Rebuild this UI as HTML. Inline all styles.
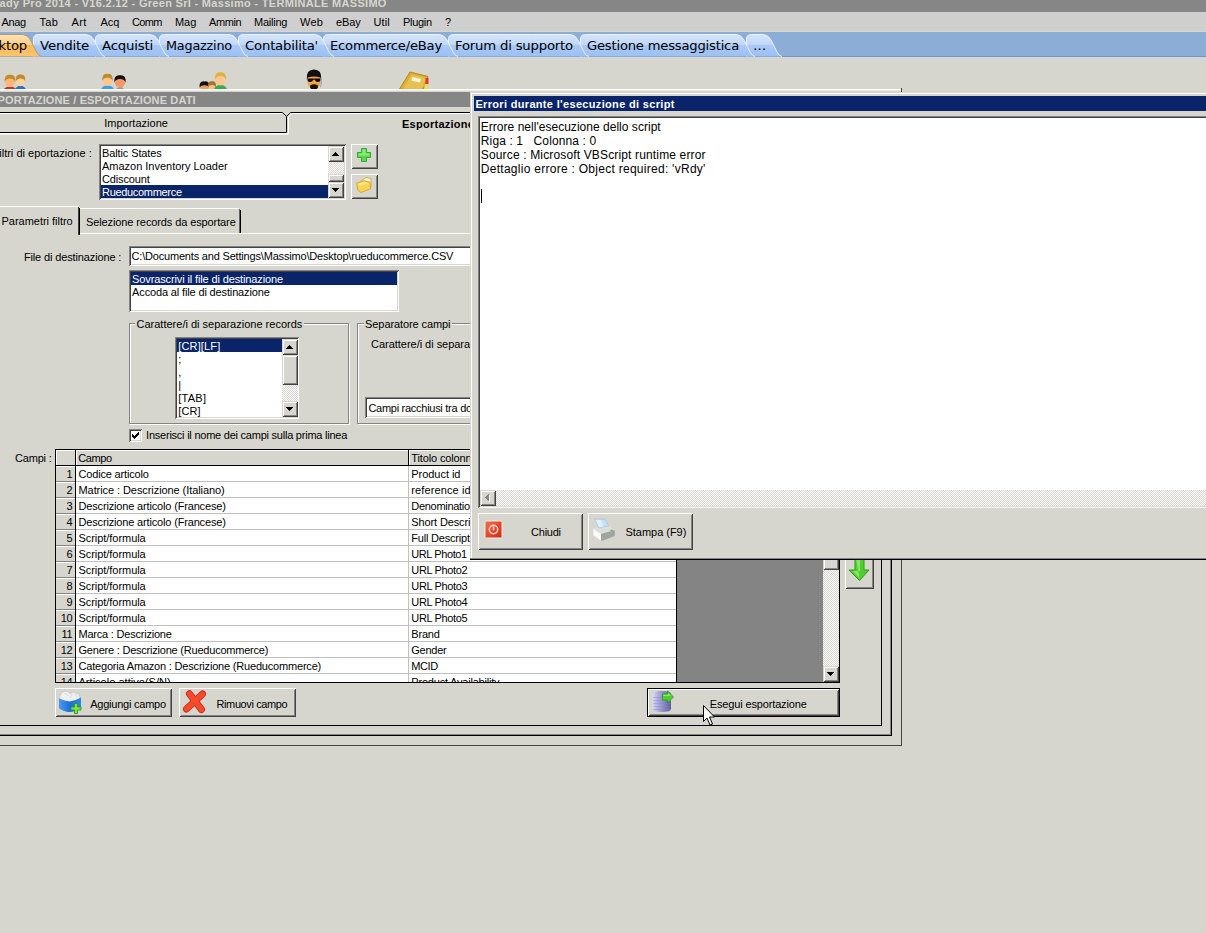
<!DOCTYPE html>
<html lang="it"><head><meta charset="utf-8"><title>Ready Pro 2014</title>
<style>
html,body{margin:0;padding:0}
html{overflow:hidden;width:1206px;height:933px}
body{width:1206px;height:933px;overflow:hidden;background:#d6d6ce;position:relative;font:11px/13px "Liberation Sans",sans-serif;letter-spacing:-0.2px;color:#000}
.a{position:absolute;white-space:pre}
.b{position:absolute}
.c{position:absolute;overflow:hidden}
.sunken{box-shadow:inset 1px 1px 0 #848484,inset -1px -1px 0 #fff,inset 2px 2px 0 #424242,inset -2px -2px 0 #d6d6ce}
.raised{background:#d6d6ce;box-shadow:inset 1px 1px 0 #fff,inset -1px -1px 0 #424242,inset 2px 2px 0 #d6d6ce,inset -2px -2px 0 #848484}
.sbtn{background:#d6d6ce;box-shadow:inset 1px 1px 0 #d6d6ce,inset -1px -1px 0 #424242,inset 2px 2px 0 #fff,inset -2px -2px 0 #848484}
.track{background-color:#fff;background-image:linear-gradient(45deg,#d6d6ce 25%,transparent 25%,transparent 75%,#d6d6ce 75%),linear-gradient(45deg,#d6d6ce 25%,transparent 25%,transparent 75%,#d6d6ce 75%);background-size:2px 2px;background-position:0 0,1px 1px}
.sel{background:#0a246a}
.w{background:#fff}
.k{background:#000}
.arr{position:absolute;width:0;height:0;border:4px solid transparent}
.tabs text{font:13px "DejaVu Sans",sans-serif;fill:#000}
</style></head><body>

<div class="c" style="left:0;top:0;width:1206px;height:12px;background:#868686">
<div class="a" style="top:-3px;left:-0.5px;letter-spacing:0.305px;font-weight:bold;color:#d6d6ce;">ady Pro 2014 - V16.2.12 - Green Srl - Massimo - TERMINALE MASSIMO</div>
</div>
<div class="b" style="left:0;top:12px;width:1206px;height:19px;background:#cfcfcf"></div>
<div class="a" style="top:16px;left:1.5px;letter-spacing:-0.376px;">Anag</div>
<div class="a" style="top:16px;left:39.5px;letter-spacing:0.317px;">Tab</div>
<div class="a" style="top:16px;left:71.5px;letter-spacing:0.379px;">Art</div>
<div class="a" style="top:16px;left:100.5px;letter-spacing:-0.09px;">Acq</div>
<div class="a" style="top:16px;left:132px;letter-spacing:-0.673px;">Comm</div>
<div class="a" style="top:16px;left:175px;letter-spacing:-0.069px;">Mag</div>
<div class="a" style="top:16px;left:209px;letter-spacing:-0.407px;">Ammin</div>
<div class="a" style="top:16px;left:254px;letter-spacing:-0.237px;">Mailing</div>
<div class="a" style="top:16px;left:300px;letter-spacing:0.259px;">Web</div>
<div class="a" style="top:16px;left:336px;letter-spacing:-0.095px;">eBay</div>
<div class="a" style="top:16px;left:373.5px;letter-spacing:0.077px;">Util</div>
<div class="a" style="top:16px;left:403px;letter-spacing:-0.313px;">Plugin</div>
<div class="a" style="top:16px;left:445px;letter-spacing:0.075px;">?</div>
<svg class="b tabs" style="left:0;top:32px" width="1206" height="25" viewBox="0 0 1206 25">
<defs><linearGradient id="tb" x1="0" y1="0" x2="0" y2="1"><stop offset="0" stop-color="#d4e4fb"/><stop offset="0.45" stop-color="#c2d8f8"/><stop offset="0.5" stop-color="#a9c8f5"/><stop offset="1" stop-color="#9cc0f4"/></linearGradient>
<linearGradient id="to" x1="0" y1="0" x2="0" y2="1"><stop offset="0" stop-color="#fde3b5"/><stop offset="0.45" stop-color="#fbcf8c"/><stop offset="0.5" stop-color="#f9b95a"/><stop offset="1" stop-color="#fbc56f"/></linearGradient></defs>
<rect x="0" y="0" width="1206" height="25" fill="#8caed6"/><rect x="0" y="24" width="1206" height="1" fill="#6f95c9"/>
<path d="M746.5 24.5 L746.5 7 Q746.5 2.5 751.5 2.5 L763 2.5 Q768 2.5 771 8 L777 20 Q779 24 782 24.5 Z" fill="url(#tb)"/><path d="M746.5 24.5 L746.5 7 Q746.5 2.5 751.5 2.5 L763 2.5 Q768 2.5 771 8 L777 20 Q779 24 782 24.5" fill="none" stroke="#e9f1fd" stroke-width="1"/>
<path d="M580.5 24.5 L580.5 7 Q580.5 2.5 585.5 2.5 L736 2.5 Q741 2.5 744 8 L750 20 Q752 24 755 24.5 Z" fill="url(#tb)"/><path d="M580.5 24.5 L580.5 7 Q580.5 2.5 585.5 2.5 L736 2.5 Q741 2.5 744 8 L750 20 Q752 24 755 24.5" fill="none" stroke="#e9f1fd" stroke-width="1"/>
<path d="M448.5 24.5 L448.5 7 Q448.5 2.5 453.5 2.5 L570 2.5 Q575 2.5 578 8 L584 20 Q586 24 589 24.5 Z" fill="url(#tb)"/><path d="M448.5 24.5 L448.5 7 Q448.5 2.5 453.5 2.5 L570 2.5 Q575 2.5 578 8 L584 20 Q586 24 589 24.5" fill="none" stroke="#e9f1fd" stroke-width="1"/>
<path d="M323.5 24.5 L323.5 7 Q323.5 2.5 328.5 2.5 L439 2.5 Q444 2.5 447 8 L453 20 Q455 24 458 24.5 Z" fill="url(#tb)"/><path d="M323.5 24.5 L323.5 7 Q323.5 2.5 328.5 2.5 L439 2.5 Q444 2.5 447 8 L453 20 Q455 24 458 24.5" fill="none" stroke="#e9f1fd" stroke-width="1"/>
<path d="M238.5 24.5 L238.5 7 Q238.5 2.5 243.5 2.5 L315 2.5 Q320 2.5 323 8 L329 20 Q331 24 334 24.5 Z" fill="url(#tb)"/><path d="M238.5 24.5 L238.5 7 Q238.5 2.5 243.5 2.5 L315 2.5 Q320 2.5 323 8 L329 20 Q331 24 334 24.5" fill="none" stroke="#e9f1fd" stroke-width="1"/>
<path d="M159.5 24.5 L159.5 7 Q159.5 2.5 164.5 2.5 L229 2.5 Q234 2.5 237 8 L243 20 Q245 24 248 24.5 Z" fill="url(#tb)"/><path d="M159.5 24.5 L159.5 7 Q159.5 2.5 164.5 2.5 L229 2.5 Q234 2.5 237 8 L243 20 Q245 24 248 24.5" fill="none" stroke="#e9f1fd" stroke-width="1"/>
<path d="M95.5 24.5 L95.5 7 Q95.5 2.5 100.5 2.5 L150 2.5 Q155 2.5 158 8 L164 20 Q166 24 169 24.5 Z" fill="url(#tb)"/><path d="M95.5 24.5 L95.5 7 Q95.5 2.5 100.5 2.5 L150 2.5 Q155 2.5 158 8 L164 20 Q166 24 169 24.5" fill="none" stroke="#e9f1fd" stroke-width="1"/>
<path d="M33.5 24.5 L33.5 7 Q33.5 2.5 38.5 2.5 L86 2.5 Q91 2.5 94 8 L100 20 Q102 24 105 24.5 Z" fill="url(#tb)"/><path d="M33.5 24.5 L33.5 7 Q33.5 2.5 38.5 2.5 L86 2.5 Q91 2.5 94 8 L100 20 Q102 24 105 24.5" fill="none" stroke="#e9f1fd" stroke-width="1"/>
<path d="M-20 24.5 L-20 7 Q-20 2.5 -15 2.5 L22.5 2.5 Q27.5 2.5 30.5 8 L36.5 20 Q38.5 24 41.5 24.5 Z" fill="url(#to)"/><path d="M-20 24.5 L-20 7 Q-20 2.5 -15 2.5 L22.5 2.5 Q27.5 2.5 30.5 8 L36.5 20 Q38.5 24 41.5 24.5" fill="none" stroke="#b89a6a" stroke-width="1"/>
<text x="-1.5" y="18" textLength="28.5" lengthAdjust="spacingAndGlyphs">ktop</text>
<text x="40" y="18" textLength="49" lengthAdjust="spacingAndGlyphs">Vendite</text>
<text x="102" y="18" textLength="51" lengthAdjust="spacingAndGlyphs">Acquisti</text>
<text x="166" y="18" textLength="66" lengthAdjust="spacingAndGlyphs">Magazzino</text>
<text x="245" y="18" textLength="73" lengthAdjust="spacingAndGlyphs">Contabilita'</text>
<text x="330" y="18" textLength="112" lengthAdjust="spacingAndGlyphs">Ecommerce/eBay</text>
<text x="455" y="18" textLength="118" lengthAdjust="spacingAndGlyphs">Forum di supporto</text>
<text x="587" y="18" textLength="152" lengthAdjust="spacingAndGlyphs">Gestione messaggistica</text>
<text x="753" y="18" textLength="13" lengthAdjust="spacingAndGlyphs">...</text>
</svg>
<svg class="b" style="left:0;top:57px" width="470" height="32" viewBox="0 0 470 32">
<ellipse cx="20.5" cy="33.7" rx="5.5" ry="5" fill="#2a6fd0"/><ellipse cx="20.5" cy="24" rx="4.2" ry="5.2" fill="#fcd2a0"/><path d="M15.700000000000001 24.5 Q15.3 16.8 20.5 17.6 Q25.7 16.8 25.3 24.5 Q23.7 21.3 20.5 21.400000000000002 Q17.3 21.3 15.700000000000001 24.5Z" fill="#c08a2e"/>
<ellipse cx="10" cy="34.6" rx="7" ry="5" fill="#d0302a"/><ellipse cx="10" cy="24.5" rx="4.8" ry="5.6" fill="#fbb878"/><path d="M4.6000000000000005 25.0 Q4.2 16.9 10 17.7 Q15.8 16.9 15.4 25.0 Q13.8 21.4 10 21.5 Q6.2 21.4 4.6000000000000005 25.0Z" fill="#c08a2e"/>
<ellipse cx="107.5" cy="33.4" rx="6.5" ry="5" fill="#3a9fe8"/><ellipse cx="107.5" cy="23.5" rx="4.6" ry="5.4" fill="#fcc68c"/><path d="M102.30000000000001 24.0 Q101.9 16.1 107.5 16.900000000000002 Q113.1 16.1 112.69999999999999 24.0 Q111.1 20.6 107.5 20.700000000000003 Q103.9 20.6 102.30000000000001 24.0Z" fill="#c08a2e"/>
<ellipse cx="120" cy="35.1" rx="5" ry="5" fill="#999"/><ellipse cx="120" cy="25" rx="5.2" ry="5.6" fill="#fb9868"/><path d="M114.2 25.5 Q113.8 17.4 120 18.2 Q126.2 17.4 125.8 25.5 Q124.2 21.9 120 22.0 Q115.8 21.9 114.2 25.5Z" fill="#111"/>
<ellipse cx="204.5" cy="38.9" rx="3" ry="5" fill="#444"/><ellipse cx="204.5" cy="30" rx="4.4" ry="4.4" fill="#e9a060"/><path d="M199.5 30.5 Q199.1 23.6 204.5 24.400000000000002 Q209.9 23.6 209.5 30.5 Q207.9 28.1 204.5 28.200000000000003 Q201.1 28.1 199.5 30.5Z" fill="#111"/>
<ellipse cx="212" cy="38.0" rx="2" ry="5" fill="#444"/><ellipse cx="212" cy="29.5" rx="3.4" ry="4" fill="#f6c080"/><path d="M208.0 30.0 Q207.6 23.5 212 24.3 Q216.4 23.5 216.0 30.0 Q214.4 28.0 212 28.1 Q209.6 28.0 208.0 30.0Z" fill="#a87428"/>
<ellipse cx="220.5" cy="33.0" rx="6.5" ry="5" fill="#3aaa4a"/><ellipse cx="220.5" cy="22.5" rx="5" ry="6" fill="#fcc890"/><path d="M214.9 23.0 Q214.5 14.5 220.5 15.3 Q226.5 14.5 226.1 23.0 Q224.5 19.0 220.5 19.1 Q216.5 19.0 214.9 23.0Z" fill="#e0b040"/>
<ellipse cx="314" cy="23.8" rx="6.8" ry="8.4" fill="#f5a448"/><path d="M306.8 23 Q305.8 12.6 314 12.6 Q322.2 12.6 321.2 23 L320.2 20.6 Q314 18.6 307.8 20.6Z" fill="#111"/><path d="M307.6 21.4 H320.4 V23.4 Q319.6 25.2 317.4 25 Q315.2 24.8 314.8 22.8 H313.2 Q312.8 24.8 310.6 25 Q308.4 25.2 307.6 23.4Z" fill="#0a0a0a"/><path d="M310.2 28.2 Q314 26.2 317.8 28.2 Q318.4 31 316.6 32 H311.4 Q309.6 31 310.2 28.2Z" fill="#1a1208"/><path d="M320.8 21 Q322.2 25 320.6 30" stroke="#7a86d8" stroke-width="0.8" fill="none"/>
<path d="M399.5 32 L410 15 L428 19.5 L423.5 32 Z" fill="#dcae34" stroke="#b58a1c" stroke-width="1"/><path d="M403 32 L411.5 17.5 L426 21 L422 32Z" fill="#e9c65a" opacity=".75"/><path d="M412.5 20 L421 22 L419.8 25.6 L411.3 23.6Z" fill="#fff4dc"/><rect x="425.5" y="21" width="3" height="6" fill="#e23a2a"/><rect x="424.5" y="27" width="3" height="5" fill="#f2e23a"/>
</svg>
<div class="b w" style="left:0;top:89px;width:901px;height:1px"></div><div class="b" style="left:0;top:90px;width:901px;height:1px;background:#ecebe6"></div>
<div class="c" style="left:0;top:92px;width:900px;height:15px;background:#868686">
<div class="a" style="top:2px;left:-2.5px;letter-spacing:0.129px;font-weight:bold;color:#d6d6ce;">PORTAZIONE / ESPORTAZIONE DATI</div>
</div>
<div class="b" style="left:901px;top:88px;width:1px;height:3px;background:#424242"></div>
<svg class="b" style="left:0;top:108px" width="470" height="30" viewBox="0 0 470 30">
<path d="M0 4.5 H282.5 L286.5 8.5 V24.5 H0" fill="none" stroke="#000" stroke-width="1"/>
<path d="M0 5.5 H282" fill="none" stroke="#fff" stroke-width="1"/>
<path d="M0 25.5 H288.5 V9 L291.5 5.5 H470" fill="none" stroke="#fff" stroke-width="1"/>
<path d="M0 26.5 H288.5" fill="none" stroke="#fff" stroke-width="1" opacity="0.6"/>
<path d="M286.5 8.5 L290.5 4.5 H470" fill="none" stroke="#000" stroke-width="1"/>
</svg>
<div class="a" style="top:117px;left:104.2px;letter-spacing:0.009px;">Importazione</div>
<div class="c" style="left:390px;top:114px;width:80px;height:20px">
<div class="a" style="top:4px;left:12px;letter-spacing:0.259px;font-weight:bold;">Esportazione</div>
</div>
<div class="c" style="left:0;top:144px;width:98px;height:20px">
<div class="a" style="top:3px;left:-7.5px;letter-spacing:0.007px;">Filtri di eportazione :</div>
</div>
<div class="b w sunken" style="left:99px;top:144px;width:247px;height:56px"></div>
<div class="b sel" style="left:101px;top:185px;width:227px;height:13px"></div>
<div class="a" style="top:147px;left:102px;letter-spacing:-0.111px;">Baltic States</div>
<div class="a" style="top:160px;left:102px;letter-spacing:-0.012px;">Amazon Inventory Loader</div>
<div class="a" style="top:173px;left:102px;letter-spacing:-0.136px;">Cdiscount</div>
<div class="a" style="top:186px;left:102px;letter-spacing:-0.313px;color:#fff;">Rueducommerce</div>
<div class="b track" style="left:328px;top:146px;width:16px;height:52px"></div>
<div class="b sbtn" style="left:328px;top:146px;width:16px;height:16px"><svg class="b" style="left:0;top:0" width="16" height="16" shape-rendering="crispEdges"><path d="M7 6h1v1h1v1h1v1h1v1h-7v-1h1v-1h1v-1h1z"/></svg></div>
<div class="b sbtn" style="left:328px;top:174px;width:16px;height:8px"></div>
<div class="b sbtn" style="left:328px;top:182px;width:16px;height:16px"><svg class="b" style="left:0;top:0" width="16" height="16" shape-rendering="crispEdges"><path d="M4 6h7v1h-1v1h-1v1h-1v1h-1v-1h-1v-1h-1v-1h-1z"/></svg></div>
<div class="b raised" style="left:351px;top:144px;width:27px;height:25px"><svg width="27" height="25" viewBox="0 0 27 25"><path d="M10.5 4.5H15.5V8.5H19.5V13.5H15.5V17.5H10.5V13.5H6.5V8.5H10.5Z" fill="#5cd848" stroke="#32a832" stroke-width="1"/><path d="M11.5 5.5h3v4h4v2h-11v-2h4z" fill="#9cf088" opacity=".75"/></svg></div>
<div class="b raised" style="left:351px;top:174px;width:27px;height:25px"><svg width="27" height="25" viewBox="0 0 27 25"><path d="M10 7 L15 3.5 L20 4.5 L20 13.5 L14 16Z" fill="#fdf6d4" stroke="#d4a43a" stroke-width=".9"/><path d="M5.5 9.2 L13 6.8 L19 8.2 L19.5 14.8 L10 18.5 L7 16.2Z" fill="#f8d650" stroke="#d89c2c" stroke-width=".9"/><path d="M6.5 9.8 L12.8 7.8 L18 9 L10 12Z" fill="#fdeb90" opacity=".8"/></svg></div>
<svg class="b" style="left:0;top:204px" width="470" height="32" viewBox="0 0 470 32">
<path d="M0 2.5 H78" stroke="#fff" fill="none"/>
<path d="M78.5 3 V31" stroke="#424242" fill="none"/><path d="M79.5 4 V31" stroke="#000" fill="none"/>
<path d="M80 4.5 H239" stroke="#fff" fill="none"/>
<path d="M239.5 5 V29" stroke="#636363" fill="none"/><path d="M240.5 6 V29" stroke="#000" fill="none"/>
<path d="M80 29.5 H470" stroke="#fff" fill="none"/>
</svg>
<div class="a" style="top:215px;left:1.5px;letter-spacing:-0.021px;">Parametri filtro</div>
<div class="a" style="top:216px;left:86px;letter-spacing:-0.106px;">Selezione records da esportare</div>
<div class="a" style="top:251px;left:23.9px;letter-spacing:-0.131px;">File di destinazione :</div>
<div class="b w sunken" style="left:129px;top:246px;width:345px;height:20px"></div>
<div class="a" style="top:250px;left:131.5px;letter-spacing:-0.184px;">C:\Documents and Settings\Massimo\Desktop\rueducommerce.CSV</div>
<div class="b w sunken" style="left:129px;top:270px;width:270px;height:42px"></div>
<div class="b sel" style="left:131px;top:272px;width:266px;height:13px"></div>
<div class="a" style="top:273px;left:132.1px;letter-spacing:-0.126px;color:#fff;">Sovrascrivi il file di destinazione</div>
<div class="a" style="top:286px;left:132.1px;letter-spacing:-0.143px;">Accoda al file di destinazione</div>
<div class="b" style="left:129px;top:323px;width:220px;height:101px;border:1px solid #848484;box-sizing:border-box;box-shadow:1px 1px 0 #fff,inset 1px 1px 0 #fff"></div>
<div class="b" style="left:135px;top:321px;width:168.60000000000002px;height:5px;background:#d6d6ce"></div>
<div class="a" style="top:318px;left:136.5px;letter-spacing:0.003px;">Carattere/i di separazione records</div>
<div class="b" style="left:357px;top:323px;width:200px;height:101px;border:1px solid #848484;box-sizing:border-box;box-shadow:1px 1px 0 #fff,inset 1px 1px 0 #fff"></div>
<div class="b" style="left:363.6px;top:321px;width:88.09999999999997px;height:5px;background:#d6d6ce"></div>
<div class="a" style="top:318px;left:365.1px;letter-spacing:-0.096px;">Separatore campi</div>
<div class="b w sunken" style="left:175px;top:337px;width:124px;height:82px"></div>
<div class="b sel" style="left:177px;top:339px;width:105px;height:13px"></div>
<div class="a" style="top:340px;left:178.3px;letter-spacing:0.143px;color:#fff;">[CR][LF]</div>
<div class="a" style="top:353px;left:178.3px;">;</div>
<div class="a" style="top:366px;left:178.3px;">,</div>
<div class="a" style="top:379px;left:178.3px;">|</div>
<div class="a" style="top:392px;left:178.3px;letter-spacing:0.239px;">[TAB]</div>
<div class="a" style="top:405px;left:178.3px;letter-spacing:0.1px;">[CR]</div>
<div class="b track" style="left:282px;top:339px;width:16px;height:78px"></div>
<div class="b sbtn" style="left:282px;top:339px;width:16px;height:16px"><svg class="b" style="left:0;top:0" width="16" height="16" shape-rendering="crispEdges"><path d="M7 6h1v1h1v1h1v1h1v1h-7v-1h1v-1h1v-1h1z"/></svg></div>
<div class="b sbtn" style="left:282px;top:355px;width:16px;height:30px"></div>
<div class="b sbtn" style="left:282px;top:401px;width:16px;height:16px"><svg class="b" style="left:0;top:0" width="16" height="16" shape-rendering="crispEdges"><path d="M4 6h7v1h-1v1h-1v1h-1v1h-1v-1h-1v-1h-1v-1h-1z"/></svg></div>
<div class="a" style="top:338px;left:371.1px;letter-spacing:-0.032px;">Carattere/i di separazione campi :</div>
<div class="b w sunken" style="left:365px;top:397px;width:180px;height:21px"></div>
<div class="a" style="top:402px;left:368.4px;letter-spacing:-0.273px;">Campi racchiusi tra doppi apici</div>
<div class="b w sunken" style="left:129px;top:429px;width:13px;height:13px"><svg class="b" style="left:0;top:0" width="13" height="13" shape-rendering="crispEdges"><path d="M3 5h1v1h1v1h1v-1h1v-1h1v-1h1v-1h1v3h-1v1h-1v1h-1v1h-1v1h-1v-1h-1v-1h-1z"/></svg></div>
<div class="a" style="top:429px;left:146.1px;letter-spacing:-0.234px;">Inserisci il nome dei campi sulla prima linea</div>
<div class="a" style="top:452px;left:14.9px;letter-spacing:-0.158px;">Campi :</div>
<div class="b k" style="left:55px;top:449px;width:785px;height:234px"></div>
<div class="c" style="left:56px;top:450px;width:767px;height:232px;background:#848484">
<div class="b" style="left:0;top:0;width:19px;height:15px;background:#d6d6ce;box-shadow:inset 1px 1px 0 #fff"></div>
<div class="b" style="left:20px;top:0;width:332px;height:15px;background:#d6d6ce;box-shadow:inset 1px 1px 0 #fff"></div>
<div class="b" style="left:353px;top:0;width:267px;height:15px;background:#d6d6ce;box-shadow:inset 1px 1px 0 #fff"></div>
<div class="b w" style="left:20px;top:16px;width:600px;height:216px"></div>
<div class="b" style="left:352px;top:16px;width:1px;height:216px;background:#c0c0c0"></div>
<div class="b k" style="left:0;top:15px;width:621px;height:1px"></div>
<div class="b k" style="left:19px;top:0;width:1px;height:232px"></div>
<div class="b k" style="left:352px;top:0;width:1px;height:15px"></div>
<div class="b k" style="left:620px;top:0;width:1px;height:232px"></div>
<div class="a" style="top:2px;left:22.3px;letter-spacing:-0.414px;">Campo</div>
<div class="a" style="top:2px;left:355.3px;letter-spacing:-0.137px;">Titolo colonna</div>
<div class="b" style="left:0;top:16px;width:19px;height:15px;background:#d6d6ce;border-top:1px solid #fff;box-sizing:border-box"></div>
<div class="b" style="left:0;top:31px;width:19px;height:1px;background:#848484"></div><div class="b" style="left:20px;top:31px;width:600px;height:1px;background:#c0c0c0"></div>
<div class="a" style="top:18px;width:16.5px;text-align:right;left:0;">1</div>
<div class="a" style="top:18px;left:22.5px;letter-spacing:-0.171px;">Codice articolo</div>
<div class="a" style="top:18px;left:355.3px;letter-spacing:-0.043px;">Product id</div>
<div class="b" style="left:0;top:32px;width:19px;height:15px;background:#d6d6ce;border-top:1px solid #fff;box-sizing:border-box"></div>
<div class="b" style="left:0;top:47px;width:19px;height:1px;background:#848484"></div><div class="b" style="left:20px;top:47px;width:600px;height:1px;background:#c0c0c0"></div>
<div class="a" style="top:34px;width:16.5px;text-align:right;left:0;">2</div>
<div class="a" style="top:34px;left:22.5px;letter-spacing:-0.074px;">Matrice : Descrizione (Italiano)</div>
<div class="a" style="top:34px;left:355.3px;letter-spacing:0.109px;">reference id</div>
<div class="b" style="left:0;top:48px;width:19px;height:15px;background:#d6d6ce;border-top:1px solid #fff;box-sizing:border-box"></div>
<div class="b" style="left:0;top:63px;width:19px;height:1px;background:#848484"></div><div class="b" style="left:20px;top:63px;width:600px;height:1px;background:#c0c0c0"></div>
<div class="a" style="top:50px;width:16.5px;text-align:right;left:0;">3</div>
<div class="a" style="top:50px;left:22.5px;letter-spacing:-0.162px;">Descrizione articolo (Francese)</div>
<div class="a" style="top:50px;left:355.3px;letter-spacing:-0.294px;">Denomination</div>
<div class="b" style="left:0;top:64px;width:19px;height:15px;background:#d6d6ce;border-top:1px solid #fff;box-sizing:border-box"></div>
<div class="b" style="left:0;top:79px;width:19px;height:1px;background:#848484"></div><div class="b" style="left:20px;top:79px;width:600px;height:1px;background:#c0c0c0"></div>
<div class="a" style="top:66px;width:16.5px;text-align:right;left:0;">4</div>
<div class="a" style="top:66px;left:22.5px;letter-spacing:-0.162px;">Descrizione articolo (Francese)</div>
<div class="a" style="top:66px;left:355.3px;letter-spacing:-0.128px;">Short Description</div>
<div class="b" style="left:0;top:80px;width:19px;height:15px;background:#d6d6ce;border-top:1px solid #fff;box-sizing:border-box"></div>
<div class="b" style="left:0;top:95px;width:19px;height:1px;background:#848484"></div><div class="b" style="left:20px;top:95px;width:600px;height:1px;background:#c0c0c0"></div>
<div class="a" style="top:82px;width:16.5px;text-align:right;left:0;">5</div>
<div class="a" style="top:82px;left:22.5px;letter-spacing:-0.047px;">Script/formula</div>
<div class="a" style="top:82px;left:355.3px;letter-spacing:-0.202px;">Full Description</div>
<div class="b" style="left:0;top:96px;width:19px;height:15px;background:#d6d6ce;border-top:1px solid #fff;box-sizing:border-box"></div>
<div class="b" style="left:0;top:111px;width:19px;height:1px;background:#848484"></div><div class="b" style="left:20px;top:111px;width:600px;height:1px;background:#c0c0c0"></div>
<div class="a" style="top:98px;width:16.5px;text-align:right;left:0;">6</div>
<div class="a" style="top:98px;left:22.5px;letter-spacing:-0.047px;">Script/formula</div>
<div class="a" style="top:98px;left:355.3px;letter-spacing:-0.413px;">URL Photo1</div>
<div class="b" style="left:0;top:112px;width:19px;height:15px;background:#d6d6ce;border-top:1px solid #fff;box-sizing:border-box"></div>
<div class="b" style="left:0;top:127px;width:19px;height:1px;background:#848484"></div><div class="b" style="left:20px;top:127px;width:600px;height:1px;background:#c0c0c0"></div>
<div class="a" style="top:114px;width:16.5px;text-align:right;left:0;">7</div>
<div class="a" style="top:114px;left:22.5px;letter-spacing:-0.047px;">Script/formula</div>
<div class="a" style="top:114px;left:355.3px;letter-spacing:-0.363px;">URL Photo2</div>
<div class="b" style="left:0;top:128px;width:19px;height:15px;background:#d6d6ce;border-top:1px solid #fff;box-sizing:border-box"></div>
<div class="b" style="left:0;top:143px;width:19px;height:1px;background:#848484"></div><div class="b" style="left:20px;top:143px;width:600px;height:1px;background:#c0c0c0"></div>
<div class="a" style="top:130px;width:16.5px;text-align:right;left:0;">8</div>
<div class="a" style="top:130px;left:22.5px;letter-spacing:-0.047px;">Script/formula</div>
<div class="a" style="top:130px;left:355.3px;letter-spacing:-0.363px;">URL Photo3</div>
<div class="b" style="left:0;top:144px;width:19px;height:15px;background:#d6d6ce;border-top:1px solid #fff;box-sizing:border-box"></div>
<div class="b" style="left:0;top:159px;width:19px;height:1px;background:#848484"></div><div class="b" style="left:20px;top:159px;width:600px;height:1px;background:#c0c0c0"></div>
<div class="a" style="top:146px;width:16.5px;text-align:right;left:0;">9</div>
<div class="a" style="top:146px;left:22.5px;letter-spacing:-0.047px;">Script/formula</div>
<div class="a" style="top:146px;left:355.3px;letter-spacing:-0.363px;">URL Photo4</div>
<div class="b" style="left:0;top:160px;width:19px;height:15px;background:#d6d6ce;border-top:1px solid #fff;box-sizing:border-box"></div>
<div class="b" style="left:0;top:175px;width:19px;height:1px;background:#848484"></div><div class="b" style="left:20px;top:175px;width:600px;height:1px;background:#c0c0c0"></div>
<div class="a" style="top:162px;width:16.5px;text-align:right;left:0;">10</div>
<div class="a" style="top:162px;left:22.5px;letter-spacing:-0.047px;">Script/formula</div>
<div class="a" style="top:162px;left:355.3px;letter-spacing:-0.363px;">URL Photo5</div>
<div class="b" style="left:0;top:176px;width:19px;height:15px;background:#d6d6ce;border-top:1px solid #fff;box-sizing:border-box"></div>
<div class="b" style="left:0;top:191px;width:19px;height:1px;background:#848484"></div><div class="b" style="left:20px;top:191px;width:600px;height:1px;background:#c0c0c0"></div>
<div class="a" style="top:178px;width:16.5px;text-align:right;left:0;">11</div>
<div class="a" style="top:178px;left:22.5px;letter-spacing:-0.211px;">Marca : Descrizione</div>
<div class="a" style="top:178px;left:355.3px;letter-spacing:-0.192px;">Brand</div>
<div class="b" style="left:0;top:192px;width:19px;height:15px;background:#d6d6ce;border-top:1px solid #fff;box-sizing:border-box"></div>
<div class="b" style="left:0;top:207px;width:19px;height:1px;background:#848484"></div><div class="b" style="left:20px;top:207px;width:600px;height:1px;background:#c0c0c0"></div>
<div class="a" style="top:194px;width:16.5px;text-align:right;left:0;">12</div>
<div class="a" style="top:194px;left:22.5px;letter-spacing:-0.216px;">Genere : Descrizione (Rueducommerce)</div>
<div class="a" style="top:194px;left:355.3px;letter-spacing:-0.251px;">Gender</div>
<div class="b" style="left:0;top:208px;width:19px;height:15px;background:#d6d6ce;border-top:1px solid #fff;box-sizing:border-box"></div>
<div class="b" style="left:0;top:223px;width:19px;height:1px;background:#848484"></div><div class="b" style="left:20px;top:223px;width:600px;height:1px;background:#c0c0c0"></div>
<div class="a" style="top:210px;width:16.5px;text-align:right;left:0;">13</div>
<div class="a" style="top:210px;left:22.5px;letter-spacing:-0.189px;">Categoria Amazon : Descrizione (Rueducommerce)</div>
<div class="a" style="top:210px;left:355.3px;letter-spacing:-0.427px;">MCID</div>
<div class="b" style="left:0;top:224px;width:19px;height:15px;background:#d6d6ce;border-top:1px solid #fff;box-sizing:border-box"></div>
<div class="b" style="left:0;top:239px;width:19px;height:1px;background:#848484"></div><div class="b" style="left:20px;top:239px;width:600px;height:1px;background:#c0c0c0"></div>
<div class="a" style="top:226px;width:16.5px;text-align:right;left:0;">14</div>
<div class="a" style="top:226px;left:22.5px;letter-spacing:0.025px;">Articolo attivo(S/N)</div>
<div class="a" style="top:226px;left:355.3px;">Product Availability</div>
</div>
<div class="b track" style="left:823px;top:450px;width:16px;height:232px"></div>
<div class="b sbtn" style="left:823px;top:450px;width:16px;height:16px"><svg class="b" style="left:0;top:0" width="16" height="16" shape-rendering="crispEdges"><path d="M7 6h1v1h1v1h1v1h1v1h-7v-1h1v-1h1v-1h1z"/></svg></div>
<div class="b sbtn" style="left:823px;top:466px;width:16px;height:104px"></div>
<div class="b sbtn" style="left:823px;top:666px;width:16px;height:16px"><svg class="b" style="left:0;top:0" width="16" height="16" shape-rendering="crispEdges"><path d="M4 6h7v1h-1v1h-1v1h-1v1h-1v-1h-1v-1h-1v-1h-1z"/></svg></div>
<div class="b raised" style="left:845px;top:558px;width:29px;height:31px"><svg width="29" height="31" viewBox="0 0 29 31"><path d="M10 0 h9 v12 h5 L14.5 22.5 L4 12 H10Z" fill="#4fcf2f" stroke="#2f9a1a" stroke-width="1"/><path d="M11 0h4v13H7.5L14.5 20Z" fill="#a4f484" opacity=".65"/></svg></div>
<div class="b raised" style="left:55px;top:688px;width:117px;height:29px"></div>
<svg class="b" style="left:58px;top:689px" width="28" height="26" viewBox="0 0 28 26"><defs><linearGradient id="bk" x1="0" y1="0" x2="1" y2="0"><stop offset="0" stop-color="#4a9cf0"/><stop offset=".5" stop-color="#1f6ed8"/><stop offset="1" stop-color="#2f86e6"/></linearGradient></defs><path d="M1 9 L4 3 L9 2 L12 4.5 L16 3 L21 5.5 L22.5 10 L12 14 L1 10.5Z" fill="#f0f0f0" stroke="#c4c6c8" stroke-width=".8"/><path d="M7 4 l3 3 M14 5 l-2 4 M17 4.5 l2 3.5" stroke="#d0d2d4" stroke-width=".8" fill="none"/><path d="M1 9.2 Q5 11.5 11.5 12.5 Q18 11.5 23 8.5 V19 Q17 23.5 10 23 Q3 21.5 1 19Z" fill="url(#bk)"/><path d="M16.5 14.5h3v3.5h3.5v3h-3.5v3.5h-3v-3.5h-3.5v-3h3.5z" fill="#78e450" stroke="#2a9a1a" stroke-width=".9"/></svg>
<div class="a" style="top:698px;left:90.2px;letter-spacing:-0.228px;">Aggiungi campo</div>
<div class="b raised" style="left:179px;top:688px;width:117px;height:29px"></div>
<svg class="b" style="left:182px;top:690px" width="26" height="24" viewBox="0 0 26 24"><path d="M7.5 3.8 L19.5 19.5 M20.5 4 L4.5 19" stroke="#c8280e" stroke-width="7" stroke-linecap="round" fill="none"/><path d="M7.5 3.8 L19.5 19.5 M20.5 4 L4.5 19" stroke="#f54a2c" stroke-width="5.4" stroke-linecap="round" fill="none"/></svg>
<div class="a" style="top:698px;left:216.5px;letter-spacing:-0.386px;">Rimuovi campo</div>
<div class="b k" style="left:647px;top:688px;width:193px;height:29px"></div>
<div class="b raised" style="left:648px;top:689px;width:191px;height:27px"></div>
<svg class="b" style="left:651px;top:690px" width="24" height="24" viewBox="0 0 24 24"><defs><linearGradient id="cy" x1="0" y1="0" x2="1" y2="0"><stop offset="0" stop-color="#dcdcf6"/><stop offset=".25" stop-color="#b4b4e2"/><stop offset="1" stop-color="#5c5c9e"/></linearGradient></defs><path d="M1.5 4 Q1.5 1 10.8 1 Q20 1 20 4 V19 Q20 22 10.8 22 Q1.5 22 1.5 19Z" fill="url(#cy)"/><path d="M2 7.5h18M2 10.5h18M2 13.5h18M2 16.5h18M2 19.5h18" stroke="#8484c0" stroke-width=".7" opacity=".6"/><path d="M11.5 4 H16.5 V0.8 L22.5 7 L16.5 13 V10 H11.5Z" fill="#4fcf2f" stroke="#2a9a1a" stroke-width=".8"/><path d="M12.3 4.8H17.3V3L20 6H12.3Z" fill="#a8f488" opacity=".7"/></svg>
<div class="a" style="top:698px;left:709.8px;letter-spacing:-0.147px;">Esegui esportazione</div>
<div class="b k" style="left:0;top:725px;width:882px;height:1px"></div><div class="b k" style="left:881px;top:559px;width:1px;height:167px"></div>
<div class="b" style="left:0;top:734px;width:891px;height:1px;background:#848484"></div><div class="b k" style="left:0;top:735px;width:892px;height:1px"></div>
<div class="b" style="left:890px;top:559px;width:1px;height:176px;background:#848484"></div><div class="b k" style="left:891px;top:559px;width:1px;height:177px"></div>
<div class="b" style="left:0;top:745px;width:902px;height:1px;background:#424242"></div><div class="b" style="left:901px;top:90px;width:1px;height:656px;background:#424242"></div>
<div class="b" style="left:470px;top:92px;width:760px;height:467px;background:#d6d6ce;box-shadow:inset 1px 1px 0 #d6d6ce,inset 2px 2px 0 #fff"></div>
<div class="b" style="left:470px;top:558px;width:760px;height:1px;background:#848484"></div><div class="b" style="left:470px;top:559px;width:760px;height:1px;background:#000"></div>
<div class="b" style="left:474px;top:96px;width:760px;height:15px;background:#0a246a"></div>
<div class="a" style="top:98px;left:475.4px;letter-spacing:0.326px;font-weight:bold;color:#fff;">Errori durante l'esecuzione di script</div>
<div class="b w sunken" style="left:478px;top:116px;width:760px;height:392px"></div>
<div class="a" style="top:120px;left:480.8px;letter-spacing:0.024px;font-size:12px;line-height:14px;">Errore nell'esecuzione dello script</div>
<div class="a" style="top:134px;left:480.8px;letter-spacing:0.126px;font-size:12px;line-height:14px;">Riga : 1   Colonna : 0</div>
<div class="a" style="top:148px;left:480.8px;letter-spacing:0.15px;font-size:12px;line-height:14px;">Source : Microsoft VBScript runtime error</div>
<div class="a" style="top:162px;left:480.8px;letter-spacing:0.275px;font-size:12px;line-height:14px;">Dettaglio errore : Object required: 'vRdy'</div>
<div class="b k" style="left:481px;top:189px;width:1px;height:14px"></div>
<div class="b track" style="left:480px;top:490px;width:760px;height:16px"></div>
<div class="b sbtn" style="left:480px;top:490px;width:16px;height:16px"><svg class="b" style="left:0;top:0" width="16" height="16" shape-rendering="crispEdges"><path d="M6 8h1v-1h1v-1h1v-1h1v7h-1v-1h-1v-1h-1v-1h-1z" fill="#fff"/><path d="M5 7h1v-1h1v-1h1v-1h1v7h-1v-1h-1v-1h-1v-1h-1z" fill="#848484"/></svg></div>
<div class="b raised" style="left:478px;top:513px;width:105px;height:37px"></div>
<svg class="b" style="left:484px;top:520px" width="20" height="20" viewBox="0 0 20 20"><defs><linearGradient id="rd" x1="0" y1="0" x2="1" y2="1"><stop offset="0" stop-color="#f4704c"/><stop offset=".5" stop-color="#e8452a"/><stop offset="1" stop-color="#d02c14"/></linearGradient></defs><rect x="1" y="1" width="17" height="17" rx="1.5" fill="url(#rd)" stroke="#e6f2e2" stroke-width="1"/><circle cx="9.5" cy="9.5" r="4.2" fill="none" stroke="#fbd6cc" stroke-width="1.5"/><rect x="8.8" y="6.3" width="1.5" height="4" fill="#fde4dc"/></svg>
<div class="a" style="top:526px;left:531.1px;letter-spacing:-0.265px;">Chiudi</div>
<div class="b raised" style="left:588px;top:513px;width:105px;height:37px"></div>
<svg class="b" style="left:592px;top:517px" width="26" height="26" viewBox="0 0 26 26"><path d="M1 11.5 L13 7.8 L17.5 8.8 L22.8 12.9 L9 17Z" fill="#dcdedc"/><path d="M1 11.5 L9 17 V23.8 L1.5 18.5Z" fill="#f6f6f6"/><path d="M9 17 L22.8 12.9 V19 L10.6 23.8 H9Z" fill="#a2a4a2"/><path d="M2 15.2 L9 20 V21.4 L2 16.6Z" fill="#fff"/><path d="M2.6 2.3 H13.2 L16.5 8.9 L6.9 10.9Z" fill="#c4e2fa" stroke="#9abcd8" stroke-width=".6"/><path d="M3.4 2.8 H9 L11.5 9.6 L7.2 10.4Z" fill="#e6f3fd" opacity=".8"/><ellipse cx="19.6" cy="13.2" rx="1.3" ry=".8" fill="#3cc83c"/></svg>
<div class="a" style="top:526px;left:625.5px;letter-spacing:-0.031px;">Stampa (F9)</div>
<svg class="b" style="left:703px;top:705px" width="12" height="21" viewBox="0 0 12 21"><path d="M0.5 0.5 V16.5 L4 13 L7 20 L9.5 19 L6.5 12 H11.5Z" fill="#fff" stroke="#000" stroke-width="1"/></svg>
</body></html>
